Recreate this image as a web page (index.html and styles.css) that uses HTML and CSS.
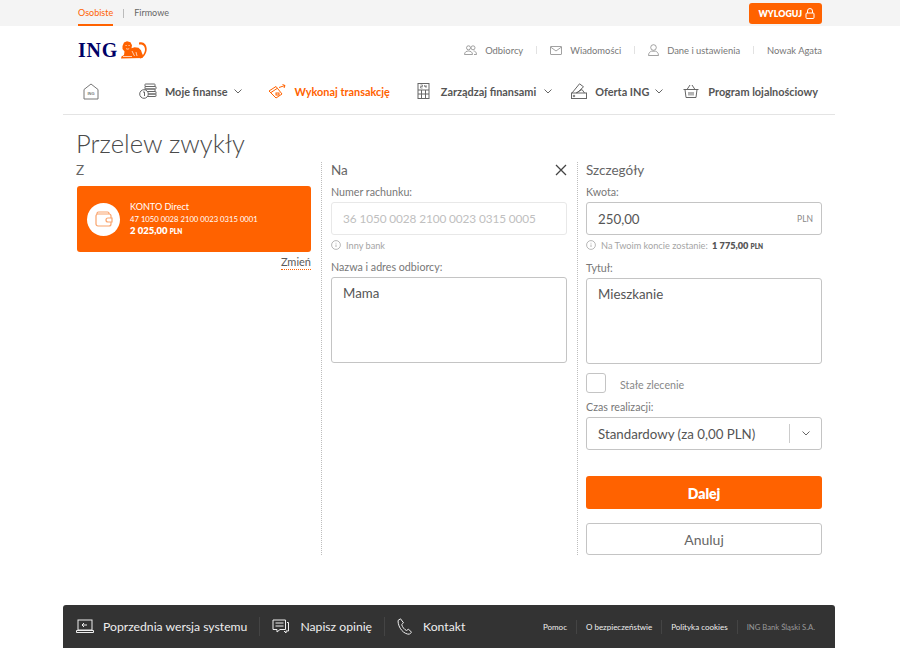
FILE: index.html
```html
<!DOCTYPE html>
<html lang="pl">
<head>
  <meta charset="UTF-8">
  <title>Przelew zwykły</title>
  <link rel="stylesheet" href="styles.css">
</head>
<body>

  <!-- Top bar -->
  <div class="topbar">
    <div class="wrap topbar-in">
      <a class="tab active">Osobiste</a>
      <span class="tab-sep"></span>
      <a class="tab">Firmowe</a>
      <button class="logout">WYLOGUJ
        <svg width="10" height="11" viewBox="0 0 10 11" fill="none" stroke="#fff" stroke-width="1"><rect x="1" y="5" width="8" height="5.500" rx="1"/><path d="M2.500 5V3a2.500 2.500 0 0 1 5 0v2"/></svg>
      </button>
    </div>
  </div>

  <div class="wrap">
    <!-- Logo and user links -->
    <div class="header">
      <div class="logo">
        <span class="logo-text">ING</span>
        <svg width="27" height="18" viewBox="0 0 27 18" fill="#ff6200">
          <path d="M1 17.500l.5-2 2.500-1.500.5-3.500-2-2.500L2.500 5 4 1.500 7 .3l3.500 1 1.500 3-.5 3 3-1 4 .5 2.500 2.500 1 3 1 2-.5 2.700z"/>
          <path d="M19 1.500c4.500-1.500 7.700 2 7.700 6.500s-3 9-7 9.500c2.700-2.200 5.300-5.500 5.300-9s-2.500-5.500-6-5z"/>
          <path d="M5.500 4.500h1.200M8.500 4.500h1.200M6 7.500c1 .8 2.200 .8 3.200 0M3 15.500h9M12 10l2.500 5M16 11l1 4" stroke="#fff" stroke-width=".7" fill="none"/>
        </svg>
      </div>
      <div class="userlinks">
        <a class="ulink">
          <svg width="13" height="10" viewBox="0 0 13 10" fill="none" stroke="#8a8a8a" stroke-width=".8"><circle cx="4.500" cy="2.800" r="2"/><circle cx="9" cy="2.800" r="2"/><path d="M.5 9.500c0-2.500 2-3.500 4-3.500s4 1 4 3.500zM9.500 6c1.500 0 3 1 3 3.500h-2.500"/></svg>
          <span>Odbiorcy</span></a>
        <span class="ulink-sep"></span>
        <a class="ulink">
          <svg width="12" height="9" viewBox="0 0 12 9" fill="none" stroke="#8a8a8a" stroke-width=".8"><rect x=".5" y=".5" width="11" height="8" rx=".5"/><path d="M.5 1l5.500 4 5.500-4"/></svg>
          <span>Wiadomości</span></a>
        <span class="ulink-sep"></span>
        <a class="ulink">
          <svg width="11" height="12" viewBox="0 0 11 12" fill="none" stroke="#8a8a8a" stroke-width=".8"><circle cx="5.500" cy="3.500" r="2.800"/><path d="M.5 11.500c0-3 2-4 3-4.300h4c1 .3 3 1.300 3 4.300z"/></svg>
          <span>Dane i ustawienia</span></a>
        <span class="ulink-sep"></span>
        <a class="ulink"><span>Nowak Agata</span></a>
      </div>
    </div>

    <!-- Main menu -->
    <nav class="menu">
      <a class="mitem m-home">
        <svg width="16" height="17" viewBox="0 0 16 17" fill="none" stroke="#777" stroke-width="1"><path d="M1 6.500L8 1l7 5.500V16H1z"/><text x="8" y="12" font-size="4" font-weight="700" fill="#777" stroke="none" text-anchor="middle" font-family="Liberation Sans">ING</text></svg>
      </a>
      <a class="mitem m-fin">
        <svg width="18" height="16" viewBox="0 0 18 16" fill="none" stroke="#666" stroke-width="1"><rect x="6" y="1" width="10" height="2.500" rx=".5"/><rect x="6" y="3.500" width="11" height="2.500" rx=".5"/><rect x="6" y="6" width="10" height="2.500" rx=".5"/><rect x="8" y="8.500" width="9" height="2.500" rx=".5"/><rect x="8" y="11" width="9" height="2.500" rx=".5"/><circle cx="5" cy="11" r="4.300" fill="#fff"/><path d="M4 9h1.500v4"/></svg>
        <span>Moje finanse</span>
        <svg class="chev" width="8" height="5" viewBox="0 0 8 5" fill="none" stroke="#666" stroke-width="1"><path d="M.5 .5L4 4l3.500-3.500"/></svg>
      </a>
      <a class="mitem m-tr hot">
        <svg width="18" height="15" viewBox="0 0 18 15" fill="none" stroke="#ff6200" stroke-width="1"><path d="M1 7l7-4.500 6 7.500-6 4z"/><path d="M3 8.500l6-4"/><path d="M11 3.500l6-2M14.500 .5L17 1.500l-1 2.500"/><rect x="8" y="9" width="3" height="2"/></svg>
        <span>Wykonaj transakcję</span>
      </a>
      <a class="mitem m-zarz">
        <svg width="13" height="16" viewBox="0 0 13 16" fill="none" stroke="#666" stroke-width="1"><rect x="1" y=".5" width="11" height="15"/><path d="M1 7h11M1 11h11M4.500 7v8.500M8.500 7v8.500"/><path d="M3.500 2h2v1.500h-2v1.500h2M7.500 2v1.500h2M9 2v3" stroke-width=".7"/></svg>
        <span>Zarządzaj finansami</span>
        <svg width="8" height="5" viewBox="0 0 8 5" fill="none" stroke="#666" stroke-width="1"><path d="M.5 .5L4 4l3.500-3.500"/></svg>
      </a>
      <a class="mitem m-of">
        <svg width="16" height="16" viewBox="0 0 16 16" fill="none" stroke="#666" stroke-width="1"><rect x=".5" y="10" width="15" height="5.500"/><path d="M1 10L8.500 .8l4 3L6 10M5 10l6-3.500 2.500 3.500"/><circle cx="3" cy="13" r=".8"/></svg>
        <span>Oferta ING</span>
        <svg class="chev" width="8" height="5" viewBox="0 0 8 5" fill="none" stroke="#666" stroke-width="1"><path d="M.5 .5L4 4l3.500-3.500"/></svg>
      </a>
      <a class="mitem m-prog">
        <svg width="16" height="14" viewBox="0 0 16 14" fill="none" stroke="#666" stroke-width="1"><path d="M.5 5.500h15M2 5.500l1 8h10l1-8M4 5.500L7 1M12 5.500L9 1M6 8v3.500M8 8v3.500M10 8v3.500"/></svg>
        <span>Program lojalnościowy</span>
      </a>
    </nav>

    <!-- Transfer form -->
    <main class="page">
      <h1 class="title">Przelew zwykły</h1>
      <div class="cols">

        <section class="col col-from">
          <h2 class="col-head">Z</h2>
          <div class="account">
            <div class="acc-icon">
              <svg width="18" height="16" viewBox="0 0 18 16" fill="none" stroke="#f9a36c" stroke-width="1.200"><path d="M2 3V2.500A1.500 1.500 0 0 1 3.500 1h9A1.500 1.500 0 0 1 14 2.500V3"/><rect x="1" y="3" width="15" height="12" rx="2"/><path d="M17 7h-4a2 2 0 0 0 0 4h4z" fill="#fff"/></svg>
            </div>
            <div class="acc-txt">
              <div class="acc-name">KONTO Direct</div>
              <div class="acc-num">47 1050 0028 2100 0023 0315 0001</div>
              <div class="acc-sum">2 025,00 <small>PLN</small></div>
            </div>
          </div>
          <div class="change"><a>Zmień</a></div>
        </section>

        <section class="col col-to">
          <div class="head-row">
            <h2 class="col-head">Na</h2>
            <svg width="12" height="12" viewBox="0 0 12 12" stroke="#444" stroke-width="1.300"><path d="M1 1l10 10M11 1L1 11"/></svg>
          </div>
          <label class="lbl">Numer rachunku:</label>
          <div class="field field-off">36 1050 0028 2100 0023 0315 0005</div>
          <div class="hint">
            <svg width="10" height="10" viewBox="0 0 10 10" fill="none" stroke="#999" stroke-width=".7"><circle cx="5" cy="5" r="4.400"/><path d="M5 4.500v2.500M5 2.800v.8"/></svg>
            <span>Inny bank</span>
          </div>
          <label class="lbl lbl-n">Nazwa i adres odbiorcy:</label>
          <div class="field area">Mama</div>
        </section>

        <section class="col col-det">
          <h2 class="col-head">Szczegóły</h2>
          <label class="lbl">Kwota:</label>
          <div class="field amount"><span>250,00</span><span class="cur">PLN</span></div>
          <div class="hint">
            <svg width="10" height="10" viewBox="0 0 10 10" fill="none" stroke="#999" stroke-width=".7"><circle cx="5" cy="5" r="4.400"/><path d="M5 4.500v2.500M5 2.800v.8"/></svg>
            <span>Na Twoim koncie zostanie: <b>1 775,00 <small>PLN</small></b></span>
          </div>
          <label class="lbl lbl-t">Tytuł:</label>
          <div class="field area">Mieszkanie</div>
          <div class="check-row">
            <span class="check"></span>
            <span class="check-txt">Stałe zlecenie</span>
          </div>
          <label class="lbl lbl-c">Czas realizacji:</label>
          <div class="field select">
            <span>Standardowy (za 0,00 PLN)</span>
            <span class="sel-arrow">
              <svg width="8" height="5" viewBox="0 0 8 5" fill="none" stroke="#666" stroke-width="1"><path d="M.5 .5L4 4l3.500-3.500"/></svg>
            </span>
          </div>
          <button class="btn btn-main">Dalej</button>
          <button class="btn btn-alt">Anuluj</button>
        </section>

      </div>
    </main>

    <!-- Footer -->
    <footer class="footer">
      <a class="f-big f-first">
        <svg width="18" height="15" viewBox="0 0 18 15" fill="none" stroke="#eee" stroke-width="1"><rect x="2" y="1" width="14" height="10"/><path d="M.5 11.500h17v2h-17zM11 6H6M8 4L6 6l2 2"/></svg>
        <span>Poprzednia wersja systemu</span></a>
      <a class="f-big">
        <svg width="17" height="16" viewBox="0 0 17 16" fill="none" stroke="#eee" stroke-width="1"><path d="M1 1h12.500v9.500H8L5 13v-2.500H1zM3.500 4h8M3.500 7h8M15 3.500h1.500V12H14v2l-2-2"/></svg>
        <span>Napisz opinię</span></a>
      <a class="f-big f-last">
        <svg width="15" height="17" viewBox="0 0 15 17" fill="none" stroke="#eee" stroke-width="1"><path d="M1 2.500L3.500 .8l3 4-1.800 1.700c.6 2.500 2.500 5 4.800 6l2-1.300 3 3-2 2C7 16.500 1 10 1 2.500z"/></svg>
        <span>Kontakt</span></a>
      <div class="f-links">
        <a>Pomoc</a>
        <a>O bezpieczeństwie</a>
        <a>Polityka cookies</a>
        <a class="f-bank">ING Bank Śląski S.A.</a>
      </div>
    </footer>
  </div>

</body>
</html>
```

FILE: styles.css
```css
* {
  box-sizing: border-box;
}
body {
  margin: 0;
  font-family: 'Lato', 'Liberation Sans', sans-serif;
  color: #5a5a5a;
  background: #fff;
  height: 648px;
  overflow: hidden;
}
.wrap {
  width: 772px;
  margin-left: 63px;
}

/* top bar */
.topbar {
  background: #f4f4f4;
  height: 26px;
}
.topbar-in {
  display: flex;
  align-items: center;
  height: 26px;
  padding: 0 13px 0 15px;
  font-size: 9px;
}
.tab {
  color: #666;
  line-height: 26px;
  height: 26px;
}
.tab.active {
  color: #ff6200;
  border-bottom: 2px solid #ff6200;
}
.tab-sep {
  width: 1px;
  height: 9px;
  background: #bbb;
  margin: 0 10px;
}
.logout {
  margin-left: auto;
  width: 73px;
  height: 21px;
  background: #ff6200;
  border: none;
  border-radius: 3px;
  color: #fff;
  font: 800 8.800px 'Lato', sans-serif;
  display: flex;
  align-items: center;
  justify-content: flex-end;
  gap: 3px;
  padding: 0 7px 0 0;
}

/* logo row */
.header {
  height: 48px;
  display: flex;
  align-items: center;
  justify-content: space-between;
  padding: 0 13px 0 15px;
}
.logo {
  display: flex;
  align-items: center;
  gap: 2px;
}
.logo-text {
  font: 700 20px 'Liberation Serif', serif;
  color: #000066;
  letter-spacing: .8px;
}
.userlinks {
  display: flex;
  align-items: center;
  font-size: 9.400px;
  color: #777;
}
.ulink {
  display: flex;
  align-items: center;
  gap: 8px;
}
.ulink-sep {
  width: 1px;
  height: 8px;
  background: #e2e2e2;
  margin: 0 13px;
}

/* main menu */
.menu {
  height: 41px;
  display: flex;
  align-items: center;
  padding: 0 0 6px 20px;
  border-bottom: 1px solid #e4e4e4;
  font-size: 10.900px;
  font-weight: 700;
  color: #555;
  white-space: nowrap;
}
.mitem {
  display: flex;
  align-items: center;
  gap: 8px;
}
.mitem.hot {
  color: #ff6200;
  gap: 9px;
}
.chev {
  margin-left: -2px;
}
.m-fin { margin-left: 40px; }
.m-tr { margin-left: 26px; }
.m-zarz { margin-left: 27px; gap: 11px; }
.m-zarz span { margin-right: -3px; }
.m-of { margin-left: 19px; }
.m-prog { margin-left: 20px; gap: 9px; }

/* page */
.page {
  height: 490px;
  padding: 0 13px 0 14px;
}
.title {
  margin: 0 0 0 -1px;
  padding-top: 10px;
  height: 47px;
  font-size: 25.600px;
  font-weight: 300;
  line-height: 36px;
  color: #4a4a4a;
}
.cols {
  display: flex;
  height: 393px;
}
.col {
  width: 256px;
  padding: 0 10px 0 9px;
  border-right: 1px dotted #bdbdbd;
}
.col-from {
  width: 245px;
  padding: 0 10px 0 0;
}
.col-det {
  border-right: none;
  width: 244px;
  padding: 0 0 0 8px;
}
.col-head {
  margin: 0;
  font-size: 13.500px;
  font-weight: 400;
  line-height: 16px;
  height: 16px;
  color: #666;
}
.head-row {
  display: flex;
  justify-content: space-between;
  align-items: center;
}
.col-from .col-head {
  margin: 0 0 8px -1px;
}

/* account card */
.account {
  height: 66px;
  background: #ff6200;
  border-radius: 3px;
  display: flex;
  align-items: center;
  padding-left: 10px;
  color: #fff;
}
.acc-icon {
  width: 33px;
  height: 33px;
  background: #fff;
  border-radius: 50%;
  display: flex;
  align-items: center;
  justify-content: center;
  margin-right: 10px;
}
.acc-name {
  font-size: 9.100px;
  line-height: 12px;
}
.acc-num {
  font-size: 7.700px;
  line-height: 12px;
}
.acc-sum {
  font-size: 9.500px;
  font-weight: 800;
  line-height: 12px;
}
small {
  font-size: 6.500px;
  font-weight: 800;
}
.change {
  text-align: right;
  margin-top: 3px;
  font-size: 11px;
  line-height: 14px;
}
.change a {
  border-bottom: 1px dotted #ff6200;
  display: inline-block;
}

/* form fields */
.lbl {
  display: block;
  margin-top: 7px;
  font-size: 10.700px;
  line-height: 14px;
  height: 17px;
  color: #777;
}
.field {
  height: 33px;
  border: 1px solid #c4c4c4;
  border-radius: 3px;
  padding: 0 11px;
  display: flex;
  align-items: center;
  font-size: 13.300px;
  color: #555;
  white-space: nowrap;
}
.field-off {
  border-color: #e8e8e8;
  color: #c0c0c0;
  font-size: 11.800px;
  letter-spacing: -.1px;
}
.area {
  height: 86px;
  align-items: flex-start;
  padding-top: 7px;
}
.amount {
  justify-content: space-between;
  padding-right: 8px;
}
.cur {
  font-size: 8.500px;
  color: #888;
}
.hint {
  display: flex;
  align-items: center;
  gap: 5px;
  height: 20px;
  font-size: 9.200px;
  color: #a5a5a5;
  white-space: nowrap;
}
.hint b {
  color: #555;
  font-weight: 800;
  margin-left: 2px;
}
.hint small {
  color: #555;
}
.lbl-n {
  margin-top: 5px;
}
.lbl-t {
  margin-top: 6px;
}
.check-row {
  display: flex;
  align-items: center;
  gap: 14px;
  margin-top: 9px;
  height: 20px;
  font-size: 10.700px;
  color: #888;
}
.check {
  width: 20px;
  height: 20px;
  border: 1px solid #c4c4c4;
  border-radius: 3px;
}
.check-txt {
  padding-top: 2px;
}
.select {
  justify-content: space-between;
  padding-right: 0;
}
.sel-arrow {
  width: 32px;
  height: 19px;
  border-left: 1px solid #ccc;
  display: flex;
  align-items: center;
  justify-content: center;
}

/* buttons */
.btn {
  display: block;
  width: 100%;
  height: 33px;
  border-radius: 3px;
  font-family: 'Lato', sans-serif;
  font-size: 14px;
  padding: 0;
}
.btn-main {
  margin-top: 26px;
  background: #ff6200;
  border: none;
  color: #fff;
  font-weight: 800;
  padding-top: 2px;
}
.btn-alt {
  margin-top: 14px;
  height: 32px;
  background: #fff;
  border: 1px solid #c4c4c4;
  color: #666;
}

/* footer */
.footer {
  height: 43px;
  background: #333;
  border-radius: 3px 3px 0 0;
  display: flex;
  align-items: center;
  padding: 0 20px 0 13px;
  color: #eee;
  white-space: nowrap;
}
.f-big {
  display: flex;
  align-items: center;
  gap: 11px;
  font-size: 12.200px;
  padding-right: 12px;
  margin-right: 12px;
  height: 19px;
  border-right: 1px solid #444;
}
.f-first {
  gap: 9px;
}
.f-last {
  border-right: none;
  padding-right: 0;
  margin-right: 0;
}
.f-links {
  margin-left: auto;
  display: flex;
  align-items: center;
  font-size: 8px;
}
.f-links a {
  padding: 2px 9px;
  border-left: 1px solid #444;
}
.f-links a:first-child {
  border-left: none;
}
.f-links a:last-child {
  padding-right: 0;
}
.f-links .f-bank {
  color: #999;
  font-size: 7.700px;
}
```
